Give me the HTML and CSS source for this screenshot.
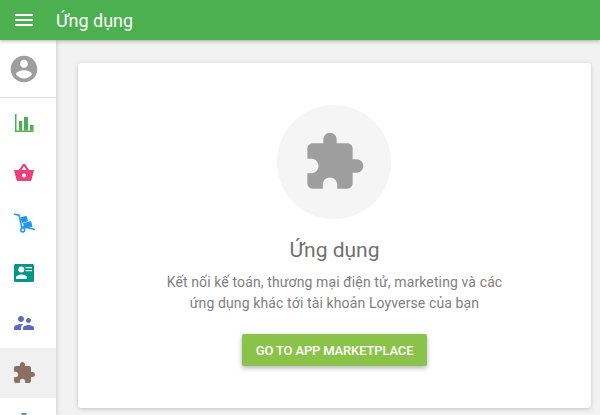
FILE: index.html
```html
<!DOCTYPE html>
<html lang="en">
<head>
<meta charset="UTF-8">
<title>Ứng dụng</title>
<link rel="stylesheet" href="styles.css">
</head>
<body>

<header class="topbar">
    <svg class="menu-icon" viewBox="0 0 24 24"><path d="M3 18h18v-2H3v2zm0-5h18v-2H3v2zm0-7v2h18V6H3z"/></svg>
    <div class="topbar-title">Ứng dụng</div>
</header>

<div class="main">
    <nav class="sidebar">
        <div class="profile">
            <svg class="avatar" viewBox="0 0 24 24"><path d="M12 2C6.48 2 2 6.48 2 12s4.48 10 10 10 10-4.48 10-10S17.52 2 12 2zm0 3c1.66 0 3 1.34 3 3s-1.34 3-3 3-3-1.34-3-3 1.34-3 3-3zm0 14.2c-2.5 0-4.71-1.28-6-3.22.03-1.99 4-3.08 6-3.08 1.99 0 5.97 1.09 6 3.08-1.29 1.94-3.5 3.22-6 3.22z"/></svg>
        </div>
        <div class="nav-item">
            <svg class="nav-icon green" viewBox="0 0 24 24"><path d="M3 3h1.500v16.500H21.500V21H3z"/><path d="M7 10h3.200v9.500H7zM12 6h4v13.500h-4zM18 14h3.500v5.500H18z"/></svg>
        </div>
        <div class="nav-item">
            <svg class="nav-icon pink" viewBox="0 0 24 24"><path fill-rule="evenodd" d="M2.700 9h18.600c.4 0 .7.3.6.7l-2.400 9c-.2.8-.9 1.300-1.700 1.300H6.200c-.8 0-1.500-.5-1.700-1.300l-2.400-9c-.1-.4.2-.7.6-.7zM12 12.500a2 2 0 1 0 0 4 2 2 0 0 0 0-4z"/><path d="M6.800 9L11 3h2l4.200 6h-2.600L12 5.200 9.400 9z"/></svg>
        </div>
        <div class="nav-item">
            <svg class="nav-icon blue" viewBox="0 0 24 24">
                <path class="cart-line" d="M2 3l5 1.200 3 13.300"/>
                <path class="cart-line" d="M10.500 15.500l12.500 3"/>
                <path d="M8.300 6.500l6.300-1.700 1.500 5.500-6.300 1.700zM11 12.200l8-2.200 1.500 5.800-8 2z"/>
                <circle class="cart-line" cx="10.700" cy="19" r="1.900"/>
            </svg>
        </div>
        <div class="nav-item">
            <svg class="nav-icon teal" viewBox="0 0 24 24"><path fill-rule="evenodd" d="M3.500 3h17c.8 0 1.500.7 1.500 1.500v15c0 .8-.7 1.500-1.500 1.500h-17c-.8 0-1.500-.7-1.500-1.500v-15C2 3.700 2.700 3 3.500 3zM9.300 5.500a3 3 0 1 0 0 6 3 3 0 0 0 0-6zM4 18h11v-1.500c0-1.900-3.800-3-5.500-3s-5.500 1.100-5.500 3zM13.500 6h6.500v1.300h-6.500zM13.500 9h6.500v1.300h-6.500z"/></svg>
        </div>
        <div class="nav-item">
            <svg class="nav-icon indigo" viewBox="0 0 24 24"><path d="M16.500 12c1.380 0 2.490-1.120 2.490-2.500S17.880 7 16.500 7 14 8.120 14 9.500s1.120 2.500 2.500 2.500zM9 11c1.660 0 2.990-1.340 2.990-3S10.660 5 9 5 6 6.340 6 8s1.340 3 3 3zm7.500 3c-1.830 0-5.500.92-5.500 2.750V19h11v-2.250c0-1.830-3.670-2.750-5.500-2.750zM9 13c-2.330 0-7 1.170-7 3.500V19h7v-2.250c0-.85.330-2.340 2.370-3.470C10.500 13.100 9.660 13 9 13z"/></svg>
        </div>
        <div class="nav-item active">
            <svg class="nav-icon brown" viewBox="0 0 24 24"><path d="M20.500 11H19V7c0-1.100-.9-2-2-2h-4V3.500C13 2.120 11.880 1 10.500 1S8 2.120 8 3.500V5H4c-1.100 0-1.990.9-1.990 2v3.800H3.500c1.490 0 2.700 1.210 2.700 2.700s-1.210 2.700-2.700 2.700H2V20c0 1.100.9 2 2 2h3.800v-1.500c0-1.490 1.210-2.700 2.700-2.700 1.490 0 2.700 1.210 2.700 2.700V22H17c1.100 0 2-.9 2-2v-4h1.500c1.380 0 2.500-1.120 2.500-2.500S21.880 11 20.500 11z"/></svg>
        </div>
        <div class="nav-item">
            <svg class="nav-icon grey" viewBox="0 0 24 24"><path d="M19.430 12.980c.04-.32.070-.64.070-.98s-.03-.66-.07-.98l2.110-1.650c.19-.15.240-.42.120-.64l-2-3.460c-.12-.22-.39-.3-.61-.22l-2.490 1c-.52-.4-1.080-.73-1.690-.98l-.38-2.650C14.460 2.180 14.250 2 14 2h-4c-.25 0-.46.180-.49.420l-.38 2.650c-.61.250-1.170.590-1.690.980l-2.490-1c-.23-.09-.49 0-.61.220l-2 3.460c-.13.220-.07.490.120.640l2.110 1.650c-.04.320-.07.650-.07.980s.03.660.07.980l-2.110 1.650c-.19.150-.24.420-.12.640l2 3.460c.12.220.39.300.61.220l2.490-1c.52.400 1.080.730 1.690.980l.38 2.650c.03.240.24.420.49.420h4c.25 0 .46-.18.49-.42l.38-2.650c.61-.25 1.170-.59 1.690-.98l2.490 1c.23.090.49 0 .61-.22l2-3.460c.12-.22.070-.49-.12-.64l-2.110-1.650zM12 15.500c-1.930 0-3.500-1.570-3.500-3.500s1.570-3.500 3.500-3.500 3.500 1.570 3.500 3.500-1.570 3.500-3.500 3.500z"/></svg>
        </div>
    </nav>

    <div class="content">
        <div class="card">
            <div class="icon-circle">
                <svg class="puzzle" viewBox="0 0 24 24"><path d="M20.500 11H19V7c0-1.100-.9-2-2-2h-4V3.500C13 2.120 11.880 1 10.500 1S8 2.120 8 3.500V5H4c-1.100 0-1.990.9-1.990 2v3.800H3.500c1.490 0 2.700 1.210 2.700 2.700s-1.210 2.700-2.700 2.700H2V20c0 1.100.9 2 2 2h3.800v-1.500c0-1.490 1.210-2.700 2.700-2.700 1.490 0 2.700 1.210 2.700 2.700V22H17c1.100 0 2-.9 2-2v-4h1.500c1.380 0 2.500-1.120 2.500-2.500S21.880 11 20.500 11z"/></svg>
            </div>
            <div class="card-title">Ứng dụng</div>
            <p class="card-text">Kết nối kế toán, thương mại điện tử, marketing và các<br>ứng dụng khác tới tài khoản Loyverse của bạn</p>
            <button type="button" class="market-btn">Go to app marketplace</button>
        </div>
    </div>
</div>

</body>
</html>
```

FILE: styles.css
```css
html, body {
    height: 100%;
}
body {
    margin: 0;
    overflow: hidden;
    display: flex;
    flex-direction: column;
    font-family: Roboto, sans-serif;
    background-color: #f2f2f2;
}
.topbar {
    position: relative;
    z-index: 2;
    flex: none;
    height: 40px;
    display: flex;
    align-items: center;
    gap: 20px;
    padding-left: 12px;
    background-color: #4caf50;
    box-shadow: 0 1px 4px rgba(0, 0, 0, 0.3);
}
.menu-icon {
    width: 24px;
    height: 24px;
    fill: #fff;
}
.topbar-title {
    font-size: 18px;
    color: #fff;
}
.main {
    flex: 1;
    min-height: 0;
    display: flex;
}
.sidebar {
    position: relative;
    z-index: 1;
    flex: none;
    width: 56px;
    background-color: #fff;
    box-shadow: 1px 0 4px rgba(0, 0, 0, 0.15);
    overflow: hidden;
}
.profile {
    height: 57px;
    display: flex;
    align-items: center;
    padding-left: 8px;
    border-bottom: 1px solid #e0e0e0;
}
.avatar {
    width: 32px;
    height: 32px;
    fill: #9e9e9e;
}
.nav-item {
    height: 50px;
    display: flex;
    align-items: center;
    padding-left: 12px;
}
.nav-item.active {
    background-color: #f0f0f0;
}
.nav-icon {
    width: 24px;
    height: 24px;
}
.green { fill: #4caf50; }
.pink { fill: #ec407a; }
.blue { fill: #2196f3; }
.teal { fill: #009688; }
.indigo { fill: #5c6bc0; }
.brown { fill: #8d6e63; }
.grey { fill: #78909c; }
.cart-line {
    fill: none;
    stroke: #2196f3;
    stroke-width: 1.5;
}
.content {
    flex: 1;
    min-width: 0;
    padding: 23px 9px 7px 22px;
    display: flex;
}
.card {
    flex: 1;
    display: flex;
    flex-direction: column;
    align-items: center;
    padding-top: 42px;
    background-color: #fff;
    border-radius: 3px;
    box-shadow: 0 1px 4px rgba(0, 0, 0, 0.2);
}
.icon-circle {
    width: 114px;
    height: 114px;
    margin-right: 1px;
    border-radius: 50%;
    display: flex;
    align-items: center;
    justify-content: center;
    background-color: #f5f5f5;
}
.puzzle {
    width: 64px;
    height: 64px;
    fill: #9e9e9e;
}
.card-title {
    margin-top: 15px;
    font-size: 21px;
    line-height: 32px;
    color: #707070;
}
.card-text {
    margin: 6px 0 0;
    font-size: 14px;
    line-height: 21px;
    letter-spacing: 0.12px;
    text-align: center;
    color: #808080;
}
.market-btn {
    margin-top: 20px;
    height: 32px;
    padding: 0 14px;
    border: none;
    border-radius: 2px;
    font-family: Roboto, sans-serif;
    font-size: 13px;
    font-weight: 500;
    letter-spacing: -0.15px;
    text-transform: uppercase;
    color: #fff;
    background-color: #8bc34a;
    box-shadow: 0 2px 5px rgba(0, 0, 0, 0.3);
}
```
